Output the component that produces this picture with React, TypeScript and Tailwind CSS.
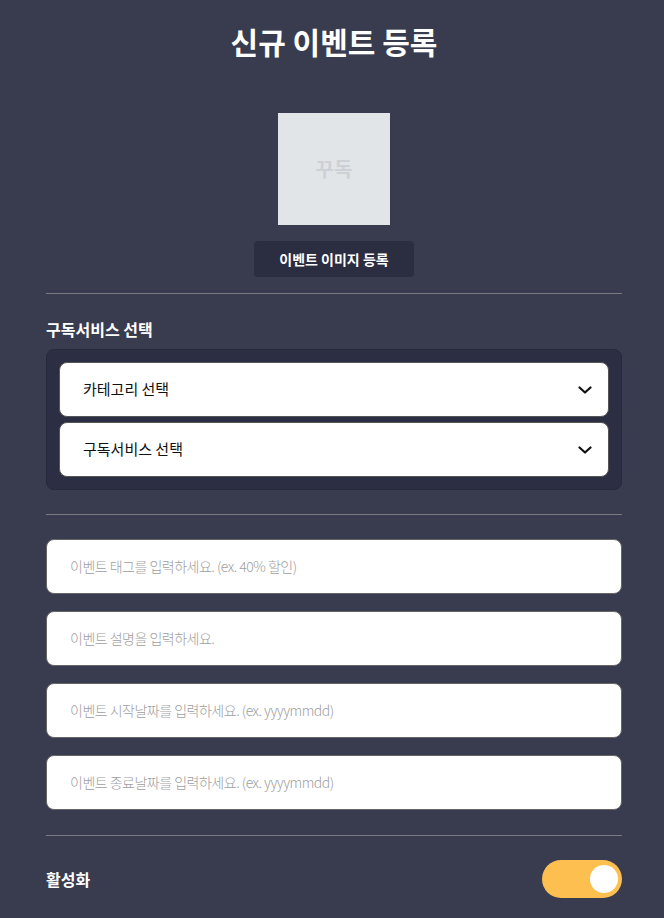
import React from "react";

const font = { fontFamily: '"Noto Sans CJK KR", "Noto Sans", sans-serif' };

function Chevron() {
  return (
    <svg width="14" height="8" viewBox="0 0 14 8" fill="none">
      <path d="M1.5 1.5 L7 6.5 L12.5 1.5" stroke="#111" strokeWidth="2.2" strokeLinecap="round" strokeLinejoin="round" />
    </svg>
  );
}

function Select({ label }: { label: string }) {
  return (
    <div className="flex h-[55px] items-center justify-between rounded-[8px] border border-[#555] bg-white pl-[23px] pr-[16px]">
      <span className="text-[15px] text-[#111]">{label}</span>
      <Chevron />
    </div>
  );
}

function Input({ placeholder }: { placeholder: string }) {
  return (
    <div className="flex h-[55px] items-center rounded-[8px] border border-[#666] bg-white pl-[23px]">
      <span className="text-[14px] font-light tracking-[-0.5px] text-[#9e9e9e]">{placeholder}</span>
    </div>
  );
}

export default function App() {
  return (
    <div className="min-h-[918px] w-[664px] bg-[#393b4f] text-white" style={font}>
      <div className="pl-[46px] pr-[42px]">
        <h1 className="pt-[19px] text-center text-[30px] font-bold leading-[44px]">신규 이벤트 등록</h1>
        <div className="mt-[50px] flex flex-col items-center">
          <div className="flex h-[112px] w-[112px] items-center justify-center bg-[#e2e5e8]">
            <span className="text-[20px] font-bold text-[#cdd1d5]">꾸독</span>
          </div>
          <div className="mt-[16px] flex h-[36px] w-[160px] items-center justify-center rounded-[4px] bg-[#2b2d41] text-[14px] font-semibold">
            이벤트 이미지 등록
          </div>
        </div>
        <div className="mt-[16px] h-px bg-[#7a7a82]" />
        <div className="mt-[24px] text-[16px] font-bold leading-[22px]">구독서비스 선택</div>
        <div className="mt-[9px] flex flex-col gap-[5px] rounded-[8px] border border-[#27283a] bg-[#2c2e43] p-[12px]">
          <Select label="카테고리 선택" />
          <Select label="구독서비스 선택" />
        </div>
        <div className="mt-[24px] h-px bg-[#7a7a82]" />
        <div className="mt-[24px] flex flex-col gap-[17px]">
          <Input placeholder="이벤트 태그를 입력하세요. (ex. 40% 할인)" />
          <Input placeholder="이벤트 설명을 입력하세요." />
          <Input placeholder="이벤트 시작날짜를 입력하세요. (ex. yyyymmdd)" />
          <Input placeholder="이벤트 종료날짜를 입력하세요. (ex. yyyymmdd)" />
        </div>
        <div className="mt-[25px] h-px bg-[#7a7a82]" />
        <div className="mt-[24px] flex items-center justify-between">
          <span className="text-[16px] font-bold">활성화</span>
          <div className="flex h-[38px] w-[80px] items-center justify-end rounded-full bg-[#fdbf4f] pr-[4px]">
            <div className="h-[28px] w-[28px] rounded-full bg-white" />
          </div>
        </div>
      </div>
    </div>
  );
}
